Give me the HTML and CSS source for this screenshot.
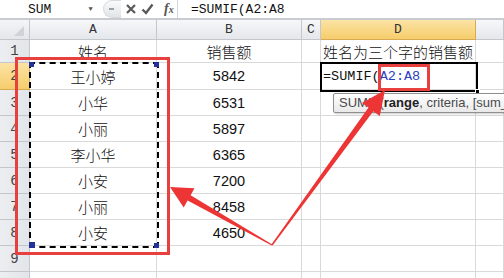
FILE: index.html
```html
<!DOCTYPE html>
<html lang="zh-CN">
<head>
    <meta charset="UTF-8">
    <title>SUMIF</title>
    <link rel="stylesheet" href="styles.css">
</head>
<body>
<div class="page">
    <!-- formula bar -->
    <div class="fbar">
        <div class="namebox"><span class="name">SUM</span><span class="drop">&#9660;</span></div>
        <div class="grip"><span></span></div>
        <div class="fbtns">
            <svg width="12" height="12" viewBox="0 0 12 12"><path d="M2 2 L10 10 M10 2 L2 10" stroke="#5a5a5a" stroke-width="2.2" fill="none"/></svg>
            <svg width="13" height="12" viewBox="0 0 13 12"><path d="M1.5 6.5 L5 10 L11.5 1.5" stroke="#5a5a5a" stroke-width="2.4" fill="none"/></svg>
            <span class="fx">f<small>x</small></span>
        </div>
        <div class="ftext">=SUMIF(A2:A8</div>
    </div>

    <!-- sheet -->
    <div class="sheet">
        <div class="corner"><span class="tri"></span></div>
        <div class="ch">A</div>
        <div class="ch">B</div>
        <div class="ch">C</div>
        <div class="ch sel">D</div>
        <div class="ch"></div>

        <div class="rh">1</div>
        <div class="c zh">姓名</div>
        <div class="c zh">销售额</div>
        <div class="c"></div>
        <div class="c zh left">姓名为三个字的销售额</div>
        <div class="c"></div>

        <div class="rh sel">2</div>
        <div class="c zh">王小婷</div>
        <div class="c num">5842</div>
        <div class="c"></div>
        <div class="c left mono">=SUMIF(<span class="ref">A2:A8</span></div>
        <div class="c"></div>

        <div class="rh">3</div>
        <div class="c zh">小华</div>
        <div class="c num">6531</div>
        <div class="c"></div>
        <div class="c"></div>
        <div class="c"></div>

        <div class="rh">4</div>
        <div class="c zh">小丽</div>
        <div class="c num">5897</div>
        <div class="c"></div>
        <div class="c"></div>
        <div class="c"></div>

        <div class="rh">5</div>
        <div class="c zh">李小华</div>
        <div class="c num">6365</div>
        <div class="c"></div>
        <div class="c"></div>
        <div class="c"></div>

        <div class="rh">6</div>
        <div class="c zh">小安</div>
        <div class="c num">7200</div>
        <div class="c"></div>
        <div class="c"></div>
        <div class="c"></div>

        <div class="rh">7</div>
        <div class="c zh">小丽</div>
        <div class="c num">8458</div>
        <div class="c"></div>
        <div class="c"></div>
        <div class="c"></div>

        <div class="rh">8</div>
        <div class="c zh">小安</div>
        <div class="c num">4650</div>
        <div class="c"></div>
        <div class="c"></div>
        <div class="c"></div>

        <div class="rh">9</div>
        <div class="c"></div>
        <div class="c"></div>
        <div class="c"></div>
        <div class="c"></div>
        <div class="c"></div>

        <div class="rh"></div>
        <div class="c"></div>
        <div class="c"></div>
        <div class="c"></div>
        <div class="c"></div>
        <div class="c"></div>
    </div>

    <!-- overlays -->
    <div class="marquee">
        <span class="hd tl"></span>
        <span class="hd tr"></span>
        <span class="hd bl"></span>
        <span class="hd br"></span>
    </div>
    <div class="active"><span class="fill"></span></div>
    <div class="tip">SUMIF(<b>range</b>, criteria, [sum_range])</div>
    <div class="redbox big"></div>
    <div class="redbox small"></div>

    <svg class="arrows" width="504" height="278" viewBox="0 0 504 278">
        <polygon fill="#ee3535" points="170,187 194.5,188.3 190.6,195.3 272.3,244.4 271.7,245.6 187.6,200.5 183.7,207.5"/>
        <polygon fill="#ee3535" points="385,90 379.8,115.9 373.3,111.2 272.6,245.4 271.4,244.6 368.5,107.6 362,102.9"/>
    </svg>
</div>
</body>
</html>
```

FILE: styles.css
```css
* {
    box-sizing: border-box;
}

body {
    margin: 0;
    background-color: #fff;
    font-family: "Noto Sans CJK SC", "Liberation Sans", sans-serif;
}

.page {
    position: relative;
    width: 504px;
    height: 278px;
    overflow: hidden;
    background-color: #fff;
}

/* formula bar */
.fbar {
    display: flex;
    align-items: center;
    height: 20px;
    border-bottom: 2px solid #c8ccd1;
    background-color: #fff;
}

.namebox {
    display: flex;
    align-items: center;
    width: 100px;
    height: 100%;
    padding-left: 28px;
    font-family: "Liberation Mono", monospace;
    font-size: 13px;
    color: #111;
}

.namebox .drop {
    margin-left: 37px;
    font-size: 7px;
    color: #555;
}

.grip {
    width: 18px;
    height: 18px;
    margin-left: 3px;
    border-radius: 9px 0 0 9px;
    background: linear-gradient(#fafafa, #e2e4e7);
    border: 1px solid #d6d9dd;
    border-right: none;
    display: flex;
    align-items: center;
    padding-left: 5px;
}

.grip span {
    width: 5px;
    height: 2px;
    background-color: #9aa0a6;
}

.fbtns {
    display: flex;
    align-items: center;
    gap: 4px;
    width: 57px;
    height: 100%;
    padding-left: 4px;
    border-right: 1px solid #d3d6da;
}

.fx {
    margin-left: 6px;
    font-family: "Liberation Serif", serif;
    font-style: italic;
    font-weight: bold;
    font-size: 14px;
    color: #555;
}

.fx small {
    font-size: 10px;
}

.ftext {
    padding-left: 13px;
    font-family: "Liberation Mono", monospace;
    font-size: 13px;
    color: #111;
}

/* sheet grid */
.sheet {
    display: grid;
    grid-template-columns: 30px 127px 145px 19px 155px 28px;
    grid-template-rows: 20px 23px 27px repeat(8, 26px);
}

.sheet > div {
    display: flex;
    align-items: center;
    justify-content: center;
    border-right: 1px solid #d9d9d9;
    border-bottom: 1px solid #d9d9d9;
    overflow: hidden;
    white-space: nowrap;
}

.corner {
    position: relative;
    background: linear-gradient(#f4f5f7, #e3e6ea);
    border-color: #c3c7cc !important;
}

.corner .tri {
    position: absolute;
    right: 5px;
    bottom: 3px;
    width: 0;
    height: 0;
    border-left: 10px solid transparent;
    border-bottom: 10px solid #cfd3d8;
}

.ch {
    background: linear-gradient(#f6f7f9, #e4e7eb);
    border-color: #c3c7cc !important;
    font-family: "Liberation Mono", monospace;
    font-size: 13px;
    color: #333;
}

.rh {
    background: linear-gradient(90deg, #eceef1, #e2e5e9);
    border-color: #c3c7cc !important;
    font-family: "Liberation Mono", monospace;
    font-size: 14px;
    color: #444;
}

.ch.sel,
.rh.sel {
    background: linear-gradient(#fbe3a4, #f6cd6c);
    border-color: #d8aa55 !important;
}

.zh {
    font-size: 15px;
    font-weight: 300;
    color: #111;
}

.num {
    font-family: "Liberation Sans", sans-serif;
    font-size: 14.5px;
    color: #111;
}

.sheet > .left {
    justify-content: flex-start;
    padding-left: 2px;
}

.mono {
    font-family: "Liberation Mono", monospace;
    font-size: 13.5px;
    color: #111;
}

.ref {
    color: #2a3ec0;
}

/* overlays */
.marquee {
    position: absolute;
    left: 29px;
    top: 62px;
    width: 130px;
    height: 186px;
    border: 2px dashed #000;
}

.hd {
    position: absolute;
    width: 5px;
    height: 5px;
    background-color: #22309a;
}

.hd.tl { left: -2px; top: -2px; }
.hd.tr { right: -2px; top: -2px; }
.hd.bl { left: -2px; bottom: -2px; width: 6px; height: 6px; }
.hd.br { right: -2px; bottom: -2px; }

.active {
    position: absolute;
    left: 320px;
    top: 62px;
    width: 158px;
    height: 30px;
    border: 2px solid #000;
}

.active .fill {
    position: absolute;
    right: -4px;
    bottom: -4px;
    width: 5px;
    height: 5px;
    background-color: #000;
    border: 1px solid #fff;
}

.tip {
    position: absolute;
    left: 333px;
    top: 93px;
    width: 200px;
    height: 20px;
    padding: 1px 0 0 5px;
    border: 1px solid #8f8f8f;
    border-radius: 2px;
    background: linear-gradient(#ffffff, #e9e9ea);
    box-shadow: 1px 1px 2px rgba(0, 0, 0, 0.2);
    font-family: "Liberation Sans", sans-serif;
    font-size: 13px;
    color: #4a4a4a;
    white-space: nowrap;
    overflow: hidden;
}

.tip b {
    color: #222;
}

.redbox {
    position: absolute;
    border: 3px solid #e8403e;
}

.redbox.big {
    left: 15px;
    top: 57px;
    width: 155px;
    height: 198px;
}

.redbox.small {
    left: 378px;
    top: 64px;
    width: 52px;
    height: 27px;
}

.arrows {
    position: absolute;
    left: 0;
    top: 0;
}
```
